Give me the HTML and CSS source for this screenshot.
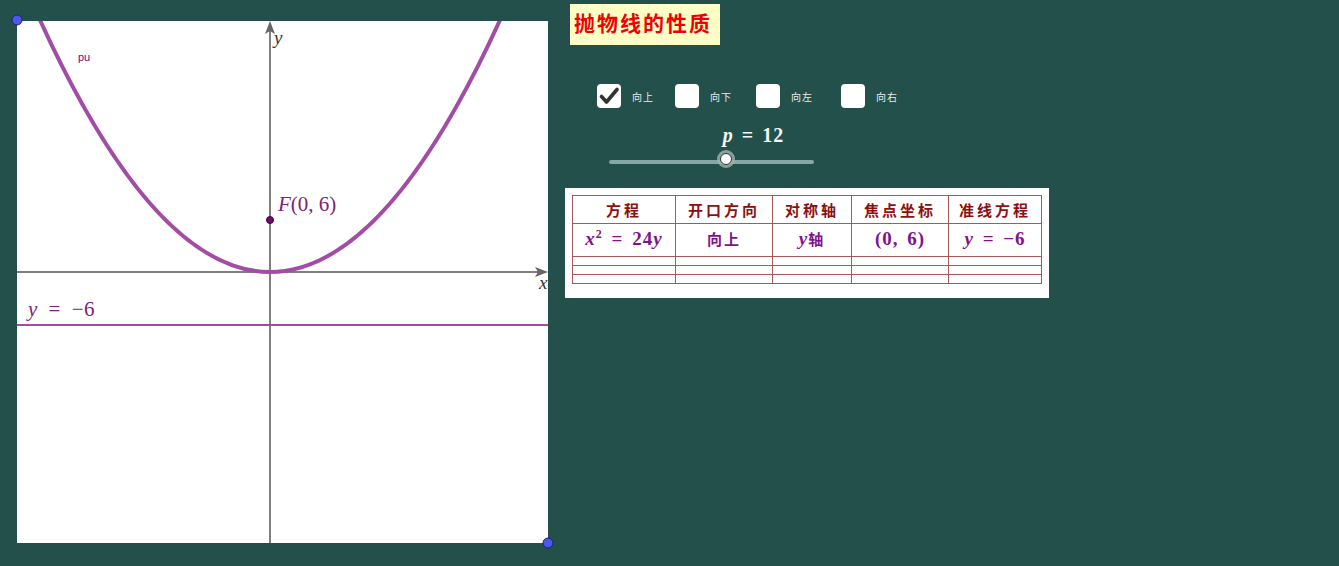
FILE: index.html
```html
<!DOCTYPE html>
<html>
<head>
<meta charset="utf-8">
<link rel="stylesheet" href="styles.css">
</head>
<body>
<div class="app">
  <div class="graph">
    <svg width="565" height="566" viewBox="0 0 565 566">
      <defs>
        <clipPath id="panel"><rect x="17" y="21" width="531" height="522"/></clipPath>
      </defs>
      <rect x="17" y="21" width="531" height="522" fill="#ffffff"/>
      <g clip-path="url(#panel)">
        <line x1="270" y1="543" x2="270" y2="30" stroke="#555" stroke-width="1.5"/>
        <path d="M270 21 L265 34 L270 31 L275 34 Z" fill="#666"/>
        <line x1="17" y1="272" x2="538" y2="272" stroke="#555" stroke-width="1.5"/>
        <path d="M548 272 L535 267 L538 272 L535 277 Z" fill="#666"/>
        <line x1="17" y1="325" x2="548" y2="325" stroke="#a24ca6" stroke-width="2.2"/>
        <path d="M30 -2.3 Q270 546.3 510 -2.3" fill="none" stroke="#a24ca6" stroke-width="4"/>
        <text class="axis-label" x="274" y="44">y</text>
        <text class="axis-label" x="539" y="289">x</text>
        <text class="pu" x="78" y="61">pu</text>
        <text class="math" x="278" y="211"><tspan font-style="italic">F</tspan>(0, 6)</text>
        <text class="math wide" x="28" y="316"><tspan font-style="italic">y</tspan> = −6</text>
      </g>
      <circle cx="270" cy="220" r="3.5" fill="#6b0f6b" stroke="#3c003c" stroke-width="1"/>
      <circle cx="17" cy="20" r="5" fill="#4a58f0" stroke="#1c2470" stroke-width="1"/>
      <circle cx="548" cy="543" r="5" fill="#4a58f0" stroke="#1c2470" stroke-width="1"/>
    </svg>
  </div>
  <div class="side">
    <div class="title">抛物线的性质</div>
    <div class="checks">
      <div class="check"><span class="box checked"><svg width="24" height="24" viewBox="0 0 24 24"><path d="M4.5 12.5 L9.5 18 L20 5.5" fill="none" stroke="#333" stroke-width="3.6" stroke-linecap="round" stroke-linejoin="round"/></svg></span><span class="lbl">向上</span></div>
      <div class="check"><span class="box"></span><span class="lbl">向下</span></div>
      <div class="check"><span class="box"></span><span class="lbl">向左</span></div>
      <div class="check"><span class="box"></span><span class="lbl">向右</span></div>
    </div>
    <div class="slider">
      <div class="slider-label"><i>p</i> = 12</div>
      <div class="track"><span class="knob"></span></div>
    </div>
    <div class="card">
      <table class="props">
        <tr class="head"><td>方程</td><td>开口方向</td><td>对称轴</td><td>焦点坐标</td><td>准线方程</td></tr>
        <tr class="vals"><td><i>x</i><sup>2</sup> = 24<i>y</i></td><td class="cjk">向上</td><td><i>y</i><span class="cjk">轴</span></td><td>(0, 6)</td><td><i>y</i> = −6</td></tr>
        <tr class="empty"><td></td><td></td><td></td><td></td><td></td></tr>
        <tr class="empty"><td></td><td></td><td></td><td></td><td></td></tr>
        <tr class="empty"><td></td><td></td><td></td><td></td><td></td></tr>
      </table>
    </div>
  </div>
</div>
</body>
</html>
```

FILE: styles.css
```css
html, body {
  margin: 0;
  padding: 0;
}
body {
  width: 1339px;
  height: 566px;
  overflow: hidden;
  background: #23504a;
  font-family: "Noto Sans CJK SC", "Noto Sans", sans-serif;
}
.app {
  display: flex;
  align-items: flex-start;
}
.graph svg {
  display: block;
}
.axis-label {
  font-family: "Liberation Serif", serif;
  font-style: italic;
  font-size: 19px;
  fill: #333;
}
.pu {
  font-family: "Liberation Sans", sans-serif;
  font-size: 11px;
  fill: #800080;
}
.math {
  font-family: "Liberation Serif", serif;
  font-size: 21px;
  fill: #7d227d;
}
.math.wide {
  word-spacing: 5px;
  letter-spacing: 0.5px;
}
.side {
  display: flex;
  flex-direction: column;
  align-items: flex-start;
}
.title {
  margin: 4px 0 0 5px;
  width: 150px;
  height: 41px;
  box-sizing: border-box;
  background: #ffffc6;
  color: #f00000;
  font-weight: 700;
  font-size: 21px;
  line-height: 37px;
  padding-left: 4px;
  letter-spacing: 2px;
}
.checks {
  display: flex;
  margin: 39px 0 0 32px;
  height: 24px;
}
.check {
  display: flex;
  align-items: center;
}
.box {
  width: 24px;
  height: 24px;
  background: #fff;
  border-radius: 4px;
  display: block;
}
.box svg { display: block; }
.lbl {
  font-size: 10px;
  color: #e8eeee;
  margin-left: 11px;
  letter-spacing: 1px;
}
.check:nth-child(1) .lbl { margin-right: 21px; }
.check:nth-child(2) .lbl { margin-right: 24px; }
.check:nth-child(3) .lbl { margin-right: 28px; }
.slider {
  margin: 15px 0 0 44px;
  width: 205px;
  display: flex;
  flex-direction: column;
  align-items: center;
}
.slider-label {
  font-family: "Liberation Serif", serif;
  font-weight: 700;
  font-size: 20px;
  color: #f4f6f6;
  margin-left: 84px;
  letter-spacing: 1px;
  word-spacing: 2px;
  line-height: 24px;
}
.slider-label i { font-style: italic; }
.track {
  position: relative;
  margin-top: 13px;
  width: 205px;
  height: 4px;
  border-radius: 2px;
  background: #86a8a4;
}
.knob {
  position: absolute;
  left: 111px;
  top: -7px;
  width: 10px;
  height: 10px;
  border-radius: 50%;
  background: #fff;
  border: 1px solid #333;
  box-shadow: 0 0 0 3px rgba(160,180,178,0.8);
}
.card {
  margin-top: 24px;
  background: #fff;
  width: 484px;
  height: 110px;
  box-sizing: border-box;
  padding: 7px;
}
.props {
  border-collapse: collapse;
  width: 470px;
  table-layout: fixed;
}
.props td {
  border: 1.3px solid #a8585a;
  padding: 0;
  text-align: center;
}
.props td:nth-child(1) { width: 102px; }
.props td:nth-child(2) { width: 96px; }
.props td:nth-child(3) { width: 78px; }
.props td:nth-child(4) { width: 96px; }
.head td {
  height: 27px;
  color: #8c1010;
  font-weight: 700;
  font-size: 15px;
  letter-spacing: 3px;
  line-height: 27px;
}
.vals td {
  height: 32px;
  color: #80128a;
  font-family: "Liberation Serif", serif;
  font-weight: 700;
  font-size: 19px;
  letter-spacing: 1px;
  word-spacing: 3px;
  line-height: 30px;
  vertical-align: top;
}
.vals td i { font-style: italic; }
.vals sup { font-size: 12px; line-height: 0; }
.vals .cjk, .vals td.cjk {
  font-family: "Noto Sans CJK SC", sans-serif;
  font-size: 15px;
  letter-spacing: 2px;
  word-spacing: 0;
}
.empty td {
  height: 8px;
}
```
